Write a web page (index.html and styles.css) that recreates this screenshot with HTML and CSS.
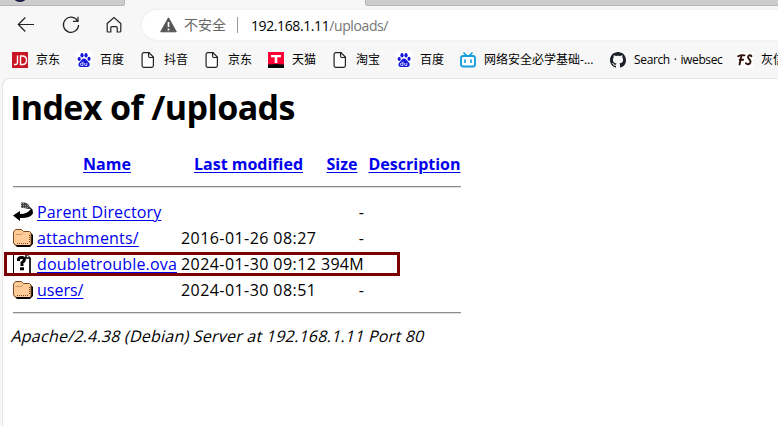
FILE: index.html
```html
<!DOCTYPE html>
<html lang="zh-CN">
<head>
<meta charset="utf-8">
<title>Index of /uploads</title>
<link rel="stylesheet" href="styles.css">
</head>
<body>
<svg class="defs" width="0" height="0">
  <symbol id="doc" viewBox="0 0 16 16"><path d="M3.9.6H9L13.4 5v8.6a1.8 1.8 0 0 1-1.8 1.8H3.9a1.8 1.8 0 0 1-1.8-1.8V2.4A1.8 1.8 0 0 1 3.900.6zM8.600.8v3.500a1.200 1.200 0 0 0 1.200 1.200h3.400" fill="#fff" stroke="#222" stroke-width="1.2"/></symbol>
  <symbol id="baidu" viewBox="0 0 16 16"><rect width="16" height="16" fill="#fff"/><g fill="#1414d8"><ellipse cx="3.200" cy="7" rx="1.600" ry="2.100"/><ellipse cx="6" cy="3.300" rx="1.600" ry="2.200"/><ellipse cx="10" cy="3.300" rx="1.600" ry="2.200"/><ellipse cx="13" cy="6.800" rx="1.600" ry="2.100"/><path d="M8 6.500c1.800 0 2.600 1.900 3.900 3 1.400 1.200 2.300 2.400 1.500 4.200-.8 1.700-3.200 1.200-5.400 1.200s-4.500.6-5.300-1.200c-.8-1.700.2-3 1.600-4.200 1.200-1.100 2-3 3.700-3z"/></g><path d="M7 9.600v3.900H5.600a1.200 1.200 0 0 1 0-2.400H7M8.700 11v1.700c0 .8.4.9 2.100.9V11" fill="none" stroke="#fff" stroke-width=".8"/></symbol>
  <symbol id="folder" viewBox="0 0 20 18"><path d="M3 4h15l2 2v9l-3 3H4l-3-3z" fill="#000"/><path d="M.5 3l2-2.500h6l2 2h6l1.500 1.500v11l-1 1.500H3L.5 14z" fill="#ffcc99" stroke="#7d4a1e"/><path d="M3 16.500h14.500L19 15" fill="none" stroke="#000"/><path d="M2.500 5.500h6l1.500-2" fill="none" stroke="#c08850" stroke-width=".8"/><path d="M4 14.500h12M16.500 6v8" fill="none" stroke="#7d4a1e" stroke-dasharray="1 1"/></symbol>
</svg>

<header class="browser">
  <div class="tabs"><div class="tab tab-left"><i class="favicon"></i></div><div class="tab tab-right"></div></div>
  <div class="toolbar">
    <svg class="nav back" width="18" height="18" viewBox="0 0 18 18"><path d="M17 8.500H1.500M8.300 1.500l-7 7 7 7"/></svg>
    <svg class="nav reload" width="18" height="18" viewBox="0 0 18 18"><path d="M15.600 5A7.600 7.600 0 1 0 16.600 9M16 .8V5.400h-5"/></svg>
    <svg class="nav home" width="16" height="18" viewBox="0 0 16 18"><path d="M1.200 7.500 8 1.600l6.800 5.900v7.400q0 1.100-1.100 1.100h-2.500v-4.300q0-1.100-1.100-1.100H5.900q-1.100 0-1.100 1.100V16H2.300q-1.100 0-1.100-1.100z"/></svg>
    <div class="address">
      <svg class="warn" width="17" height="16" viewBox="0 0 17 16"><path d="M8.500.8 16.300 14.800H.7z" fill="#555" stroke="#555" stroke-linejoin="round"/><path d="M8.500 5v5M8.500 11.500v2" stroke="#fff" stroke-width="1.700"/></svg>
      <span class="insecure">不安全</span><span class="divider"></span>
      <span class="url">192.168.1.11<span class="path">/uploads/</span></span>
    </div>
  </div>
  <nav class="bookmarks">
    <a><svg viewBox="0 0 16 16"><rect width="16" height="16" fill="#c91623"/><path d="M5.500 3.500v7q0 2-2 2H2M8.500 4v8.500h2q4 0 4-4.250T10.500 4z" fill="none" stroke="#fff" stroke-width="1.400"/></svg><span>京东</span></a>
    <a><svg><use href="#baidu"/></svg><span>百度</span></a>
    <a><svg><use href="#doc"/></svg><span>抖音</span></a>
    <a><svg><use href="#doc"/></svg><span>京东</span></a>
    <a><svg viewBox="0 0 16 16"><rect width="16" height="16" fill="#ff0036"/><path d="M0 12.500Q8 11.500 16 12.500V16H0z" fill="#080808"/><path d="M3 3h10v2.300H9.300V11H6.700V5.300H3z" fill="#fff"/></svg><span>天猫</span></a>
    <a><svg><use href="#doc"/></svg><span>淘宝</span></a>
    <a><svg><use href="#baidu"/></svg><span>百度</span></a>
    <a><svg viewBox="0 0 16 16"><rect x="1" y="4" width="14" height="10.500" rx="2" fill="#fff" stroke="#149fdb" stroke-width="1.900"/><path d="M4 1l2.500 2.500M12 1 9.500 3.500M5 8v2.200M11 8v2.200" stroke="#149fdb" stroke-width="1.700" stroke-linecap="round"/></svg><span class="b-net">网络安全必学基础-...</span></a>
    <a><svg viewBox="0 0 16 16"><path fill="#1b1f27" fill-rule="evenodd" d="M8 0C3.580 0 0 3.580 0 8c0 3.540 2.290 6.530 5.470 7.590.4.070.55-.17.55-.38 0-.19-.01-.82-.01-1.490-2.010.37-2.530-.49-2.690-.94-.09-.23-.48-.94-.82-1.130-.28-.15-.68-.52-.01-.53.63-.01 1.080.58 1.230.82.72 1.210 1.870.87 2.330.66.070-.52.28-.87.51-1.070-1.780-.2-3.640-.89-3.640-3.950 0-.87.31-1.590.82-2.150-.08-.2-.36-1.020.08-2.120 0 0 .67-.21 2.200.82.64-.18 1.320-.27 2-.27s1.360.09 2 .27c1.530-1.040 2.200-.82 2.200-.82.44 1.100.16 1.920.08 2.120.51.56.82 1.270.82 2.150 0 3.070-1.870 3.750-3.650 3.950.29.25.54.73.54 1.480 0 1.070-.01 1.930-.01 2.200 0 .21.15.46.55.38A8 8 0 0 0 16 8c0-4.420-3.580-8-8-8z"/></svg><span class="b-git">Search · iwebsec</span></a>
    <a><svg viewBox="0 0 16 16"><rect width="16" height="16" fill="#fff"/><path d="M1.200 4.200Q4 2.600 7.500 3.400M4.500 3.600 2.500 12.500M2.700 7.800h3.500M14.400 4.200C12.500 1.800 9.500 4.800 12 7c4 3.500-1 7-3 4.200" fill="none" stroke="#2e110c" stroke-width="1.900" stroke-linecap="round"/></svg><span>灰信</span></a>
  </nav>
</header>

<main class="page">
  <h1>Index of /uploads</h1>
  <div class="listing">
    <div class="row head"><span></span><a>Name</a><a>Last modified</a><a>Size</a><a>Description</a></div>
    <hr>
    <div class="row"><svg width="20" height="22" viewBox="0 0 20 22"><path d="M8 1.500h4l3 1.500 3 5h-3L11 7H8z" fill="#444"/><path d="M8 2.500h4M8 4.500h7M8 6.500h8" stroke="#999" stroke-dasharray="1 1"/><path d="M0 14.500l7-4.500v3q7 0 10.500-4.500L17 6l2.500 2.500.5 4q-3 5-13 4.500v3z" fill="#000"/></svg><a class="parent">Parent Directory</a><span></span><span class="num">-</span></div>
    <div class="row"><svg width="20" height="18"><use href="#folder"/></svg><a class="attach">attachments/</a><span class="date">2016-01-26 08:27</span><span class="num">-</span></div>
    <div class="row marked"><svg width="20" height="22" viewBox="0 0 20 22"><path d="M.5.500H13l4 4v16H.5z" fill="#fff" stroke="#000"/><path d="M17 5v16M13 1v4h4" fill="none" stroke="#000" stroke-width="1.400"/><path d="M5.500 8V6.500q0-2 3-2t3 2q0 1.500-2.500 3.200V13" fill="none" stroke="#000" stroke-width="3"/><path d="M7 14.300h4v3H7z"/></svg><a class="ova">doubletrouble.ova</a><span class="date">2024-01-30 09:12</span><span class="num big">394M</span></div>
    <div class="row"><svg width="20" height="18"><use href="#folder"/></svg><a>users/</a><span class="date">2024-01-30 08:51</span><span class="num">-</span></div>
    <hr>
  </div>
  <address><span>Apache/2.4.38 (Debian) Server at 192.168.1.11 Port 80</span></address>
</main>
</body>
</html>
```
FILE: styles.css
```css
*, *::after { box-sizing: border-box; }
html, body { margin: 0; height: 100%; overflow: hidden; }
body { background: #f7f7f7; color: #000; font-family: "Open Sans", "Noto Sans CJK SC", sans-serif; }
.defs { position: absolute; }
.browser { height: 78px; overflow: hidden; }
.tabs { display: flex; justify-content: space-between; height: 6px; }
.tab { height: 6px; background: #cdcdcd; border: solid #b5b5b5; border-width: 0 1px 1px 0; border-radius: 0 0 3px 0; overflow: hidden; }
.tab-left { width: 125px; }
.tab-right { width: 413px; border-width: 0 0 1px 1px; border-radius: 0 0 0 3px; }
.favicon { display: block; width: 12px; height: 8px; margin: -6px 0 0 14px; border-radius: 50%; background: #20204c; }
.toolbar { display: flex; align-items: center; height: 38px; }
.nav { flex: none; fill: none; stroke: #222; stroke-width: 1.2; }
.back { margin-left: 17px; }
.reload { margin-left: 27px; }
.home { margin-left: 26px; }
.address { display: flex; align-items: center; flex: 1; height: 30px; margin: 0 0 0 20px; padding-left: 18px; border-radius: 15px 0 0 15px; background: #fff; box-shadow: 0 0 3px #e6e6e6; white-space: nowrap; }
.insecure { width: 42px; margin-left: 7px; font-size: 14px; color: #666; line-height: 20px; }
.divider { width: 1px; height: 16px; margin-left: 11px; background: #999; }
.url { margin-left: 13px; font-size: 14px; letter-spacing: -.4px; }
.path { color: #767676; }
.bookmarks { display: flex; height: 32px; align-items: center; padding-left: 12px; white-space: nowrap; font-size: 12px; }
.bookmarks a { display: flex; align-items: center; flex: none; margin-right: 16px; }
.bookmarks svg { width: 16px; height: 16px; margin-right: 8px; flex: none; }
.bookmarks span { line-height: 18px; min-width: 24px; }
.bookmarks .b-net { width: 110px; }
.bookmarks .b-git { width: 87px; letter-spacing: -.38px; word-spacing: 1.2px; }
.page { height: 348px; margin-left: 2px; padding: 11px 8px; border: 1px solid #e5e5e5; border-width: 1px 0 0 1px; border-radius: 8px 0 0 0; background: #fff; font-size: 16px; white-space: nowrap; }
h1 { margin: 0 0 0 -1px; height: 61px; font-size: 34px; line-height: 34px; letter-spacing: -.6px; }
.listing { width: 448px; margin-left: 2px; }
.row { display: grid; grid-template-columns: 20px 140px 135px 44px 93px; column-gap: 4px; height: 26px; align-items: center; line-height: 26px; position: relative; }
.row svg { display: block; }
.listing a { color: #0000ee; text-decoration: underline; text-decoration-thickness: 1px; text-underline-offset: 2px; justify-self: start; }
.listing .head a { justify-self: center; }
.head { font-weight: 700; }
.parent { letter-spacing: .12px; }
.attach { letter-spacing: .2px; }
.ova { letter-spacing: .16px; }
.date { letter-spacing: .43px; }
.num { justify-self: end; }
.big { letter-spacing: .3px; }
hr { height: 2px; margin: 9px 0 11px; border: 0; border-top: 1px solid #8d8d8d; border-bottom: 1px solid #dedede; }
.marked::after { content: ""; position: absolute; left: -9px; top: 1px; width: 396px; height: 24px; border: 3px solid #7b0000; }
main address { font-style: normal; line-height: 26px; margin: -2px 0 0 1px; letter-spacing: .23px; }
main address span { display: inline-block; transform: skewX(-14deg); }
```
